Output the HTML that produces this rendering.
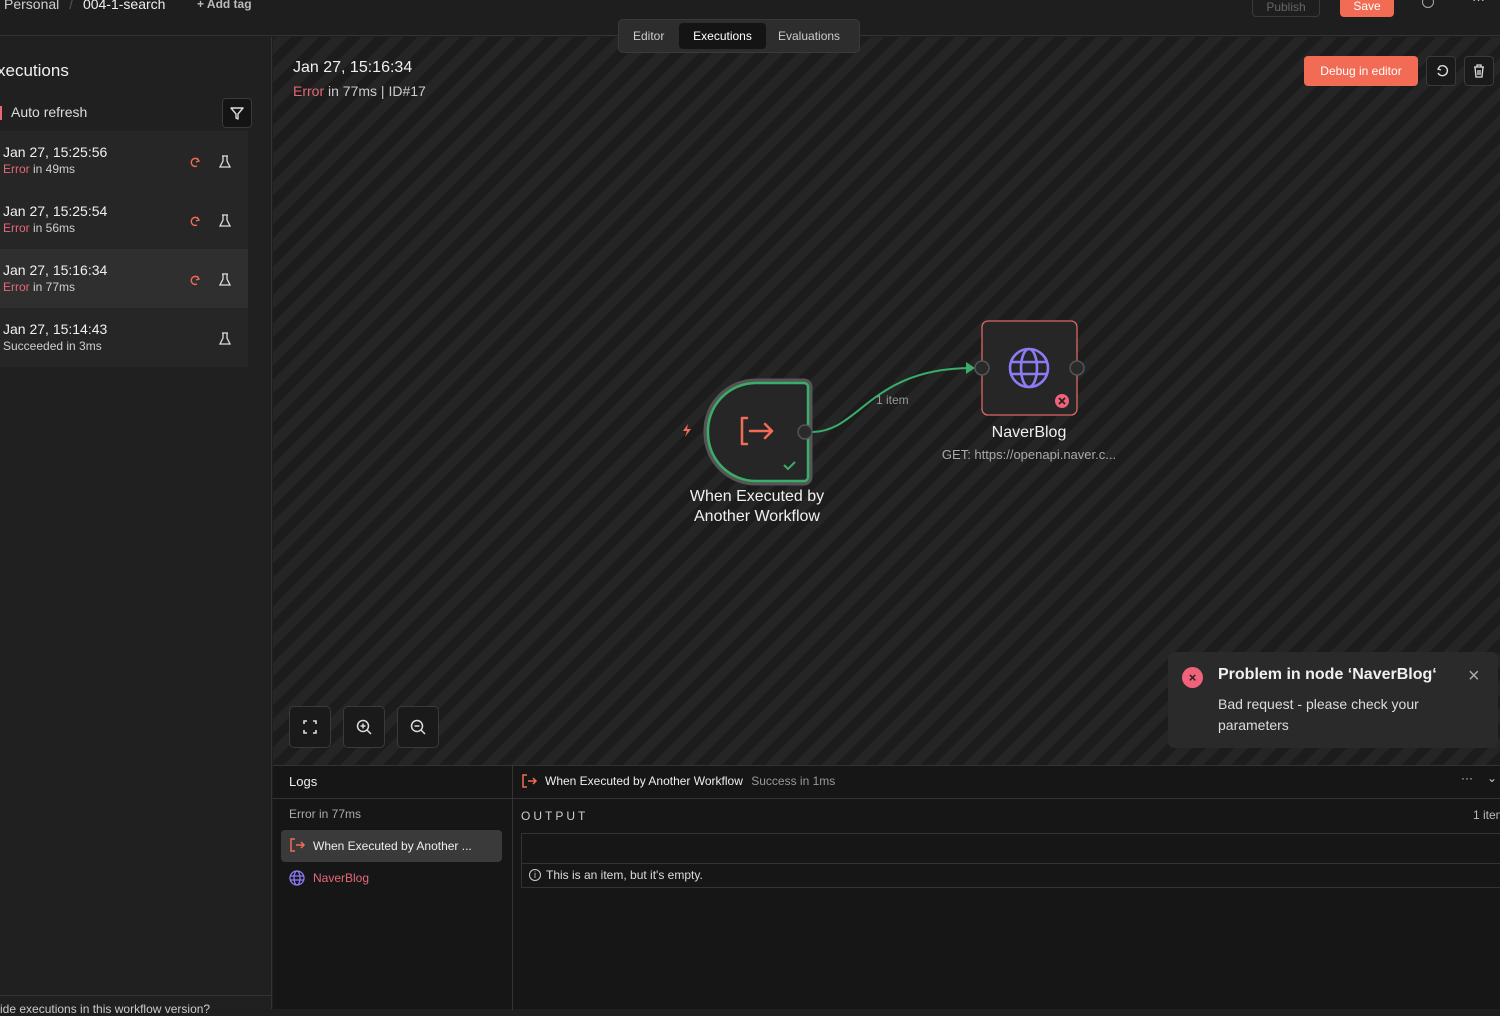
<!DOCTYPE html>
<html><head><meta charset="utf-8"><style>
*{box-sizing:border-box;margin:0;padding:0}
body{width:1500px;height:1009px;overflow:hidden;background:#1f1f1f;font-family:"Liberation Sans",sans-serif;color:#e8e8e8;position:relative;white-space:nowrap}
.abs{position:absolute}
.top{left:0;top:0;width:1500px;height:36px;background:#1e1e1e;border-bottom:1px solid #333}
.side{left:0;top:37px;width:272px;height:972px;background:#202020;border-right:1px solid #333}
.canvas{left:273px;top:37px;width:1227px;height:728px;background:repeating-linear-gradient(-45deg,#1c1c1c 0 10px,#252525 10px 20px)}
.item{position:absolute;left:0;width:248px;height:59px;background:#262626}
.item .d{position:absolute;left:3px;top:13px;font-size:14px;color:#f0f0f0}
.item .s{position:absolute;left:3px;top:31px;font-size:12px;color:#cfcfcf}
.err{color:#e5687a}
.btn{position:absolute;width:42px;height:42px;border:1px solid #3a3a3a;border-radius:5px;background:#1a1a1a}
.logs{left:273px;top:765px;width:1227px;height:244px;background:#161616;border-top:1px solid #333}
</style></head><body>
<div class="abs top">
 <div class="abs" style="left:4px;top:-4px;font-size:14px;color:#cfcfcf">Personal <span style="color:#555;margin:0 6px">/</span> <span style="color:#eee">004-1-search</span></div>
 <div class="abs" style="left:197px;top:-3px;font-size:12px;color:#bbb;font-weight:bold">+ Add tag</div>
 <div class="abs" style="left:1252px;top:-10px;width:68px;height:27px;border:1px solid #3a3a3a;border-radius:4px;font-size:12px;color:#666;text-align:center;padding-top:9px">Publish</div>
 <div class="abs" style="left:1340px;top:-10px;width:54px;height:27px;background:#f26b55;border-radius:4px;font-size:12px;color:#fff;text-align:center;padding-top:9px">Save</div>
 <div class="abs" style="left:1422px;top:-4px;width:12px;height:12px;border:1.5px solid #aaa;border-radius:50%"></div>
 <div class="abs" style="left:1472px;top:-8px;font-size:13px;color:#ccc">···</div>
</div>
<div class="abs side">
 <div class="abs" style="left:-3px;top:24px;font-size:17px;color:#f0f0f0">xecutions</div>
 <div class="abs" style="left:0;top:69px;width:2px;height:14px;background:#e5687a"></div>
 <div class="abs" style="left:11px;top:67px;font-size:14px;color:#ddd">Auto refresh</div>
 <div class="abs" style="left:222px;top:61px;width:30px;height:30px;border:1px solid #3a3a3a;border-radius:4px;background:#141414">
  <svg width="28" height="28" viewBox="0 0 28 28"><path d="M8 9h12l-5 6v5l-2-1v-4z" fill="none" stroke="#ddd" stroke-width="1.4" stroke-linejoin="round"/></svg></div>
 <div class="item" style="top:94px"><div class="d">Jan 27, 15:25:56</div><div class="s"><span class="err">Error</span> in 49ms</div></div>
 <div class="item" style="top:153px"><div class="d">Jan 27, 15:25:54</div><div class="s"><span class="err">Error</span> in 56ms</div></div>
 <div class="item" style="top:212px;background:#2f2f2f"><div class="d">Jan 27, 15:16:34</div><div class="s"><span class="err">Error</span> in 77ms</div></div>
 <div class="item" style="top:271px"><div class="d">Jan 27, 15:14:43</div><div class="s">Succeeded in 3ms</div></div>
 <svg class="abs" style="left:0;top:94px" width="248" height="240">
  <g fill="none" stroke="#f26b55" stroke-width="1.4"><path d="M199 30a4 4 0 1 0 -2 5M197 27l2 3-3 1"/><path d="M199 89a4 4 0 1 0 -2 5M197 86l2 3-3 1"/><path d="M199 148a4 4 0 1 0 -2 5M197 145l2 3-3 1"/></g>
  <g fill="none" stroke="#ddd" stroke-width="1.3"><path d="M223 25v5l-3 6h10l-3-6v-5M222 25h6"/><path d="M223 84v5l-3 6h10l-3-6v-5M222 84h6"/><path d="M223 143v5l-3 6h10l-3-6v-5M222 143h6"/><path d="M223 202v5l-3 6h10l-3-6v-5M222 202h6"/></g>
 </svg>
 <div class="abs" style="left:0;top:958px;width:272px;height:1px;background:#333"></div>
 <div class="abs" style="left:0;top:965px;font-size:12px;color:#ccc">ide executions in this workflow version?</div>
</div>
<div class="abs canvas">
 <div class="abs" style="left:20px;top:22px;font-size:16px;color:#f0f0f0">Jan 27, 15:16:34</div>
 <div class="abs" style="left:20px;top:46px;font-size:14px;color:#ccc"><span class="err">Error</span> in 77ms | ID#17</div>
 <div class="abs" style="left:1031px;top:19px;width:114px;height:30px;background:#f26b55;border-radius:4px;font-size:12px;color:#fff;text-align:center;padding-top:8px">Debug in editor</div>
 <div class="btn" style="left:1153px;top:19px;width:30px;height:30px;border-radius:4px"><svg width="28" height="28"><path d="M11 16a5 5 0 1 0 1-6M13 9l-2 3 3 1" fill="none" stroke="#ddd" stroke-width="1.4"/></svg></div>
 <div class="btn" style="left:1191px;top:19px;width:30px;height:30px;border-radius:4px"><svg width="28" height="28"><path d="M9 10h10M12 10V8h4v2M10 10l1 10h6l1-10M13 13v5M15 13v5" fill="none" stroke="#ddd" stroke-width="1.3"/></svg></div>
 <div class="abs" style="left:603px;top:356px;font-size:12px;color:#999">1 item</div>
 <div class="btn" style="left:16px;top:669px"><svg width="40" height="40"><path d="M14 17v-3h3M23 14h3v3M26 23v3h-3M17 26h-3v-3" fill="none" stroke="#ddd" stroke-width="1.6"/></svg></div>
 <div class="btn" style="left:70px;top:669px"><svg width="40" height="40"><circle cx="19" cy="19" r="5.5" fill="none" stroke="#ddd" stroke-width="1.5"/><path d="M23 23l4 4M19 16.5v5M16.5 19h5" stroke="#ddd" stroke-width="1.5"/></svg></div>
 <div class="btn" style="left:124px;top:669px"><svg width="40" height="40"><circle cx="19" cy="19" r="5.5" fill="none" stroke="#ddd" stroke-width="1.5"/><path d="M23 23l4 4M16.5 19h5" stroke="#ddd" stroke-width="1.5"/></svg></div>
 <div class="abs" style="left:895px;top:615px;width:330px;height:96px;background:#2a2a2a;border-radius:6px">
  <div class="abs" style="left:14px;top:15px;width:21px;height:21px;border-radius:50%;background:#f0627a;color:#222;font-size:13px;text-align:center;line-height:21px;font-weight:bold">×</div>
  <div class="abs" style="left:50px;top:14px;font-size:16px;font-weight:bold;color:#f0f0f0">Problem in node ‘NaverBlog‘</div>
  <div class="abs" style="left:50px;top:42px;font-size:14px;color:#ddd;line-height:21px;width:240px;white-space:normal">Bad request - please check your parameters</div>
  <div class="abs" style="left:300px;top:13px;font-size:20px;color:#aaa">×</div>
 </div>
</div>
<svg class="abs" style="left:0;top:0" width="1500" height="765">
 <path d="M812 432 C860 432 870 368 972 368" fill="none" stroke="#3aad6a" stroke-width="2"/>
 <path d="M966 362l9 6-9 6z" fill="#3aad6a"/>
 <path d="M756 383h48a4 4 0 0 1 4 4v90a4 4 0 0 1 -4 4h-48a48 48 0 0 1 -48 -48v0a48 48 0 0 1 48-50z" fill="none" stroke="#555" stroke-width="9"/>
 <path d="M756 383h48a4 4 0 0 1 4 4v90a4 4 0 0 1 -4 4h-48a48 48 0 0 1 -48 -48v0a48 48 0 0 1 48-50z" fill="#262626" stroke="#3aad6a" stroke-width="2.5"/>
 <path d="M747 418h-5v26h5M750 431h22M765 424l7 7-7 7" fill="none" stroke="#f26b55" stroke-width="2.5" stroke-linecap="round" stroke-linejoin="round"/>
 <path d="M784 465l4 4 7-7" fill="none" stroke="#3aad6a" stroke-width="2"/>
 <path d="M688 424l-5 7h4l-2 6 6-8h-4z" fill="#f26b55"/>
 <circle cx="805" cy="432" r="7" fill="#2a2a2a" stroke="#555" stroke-width="1.5"/>
 <rect x="982" y="321" width="95" height="94" rx="6" fill="#262626" stroke="#d66" stroke-width="1.3"/>
 <g fill="none" stroke="#8b7cf6" stroke-width="2.6"><circle cx="1029" cy="368" r="19"/><ellipse cx="1029" cy="368" rx="8" ry="19"/><path d="M1011 362h36M1011 374h36"/></g>
 <circle cx="1062" cy="401" r="7" fill="#f0627a"/><path d="M1059 398l6 6M1065 398l-6 6" stroke="#222" stroke-width="1.8"/>
 <circle cx="982" cy="368" r="7" fill="#2a2a2a" stroke="#555" stroke-width="1.5"/>
 <circle cx="1077" cy="368" r="7" fill="#2a2a2a" stroke="#555" stroke-width="1.5"/>
</svg>
<div class="abs" style="left:677px;top:487px;width:160px;text-align:center;font-size:16px;line-height:20px;color:#f0f0f0;white-space:normal">When Executed by Another Workflow</div>
<div class="abs" style="left:929px;top:424px;width:200px;text-align:center;font-size:16px;color:#f0f0f0">NaverBlog</div>
<div class="abs" style="left:929px;top:447px;width:200px;text-align:center;font-size:13px;color:#aaa">GET: https://openapi.naver.c...</div>
<div class="abs" style="left:618px;top:19px;width:242px;height:34px;background:#2d2d2d;border-radius:5px;border:1px solid #3a3a3a;font-size:12px;color:#ccc">
 <div class="abs" style="left:14px;top:9px">Editor</div>
 <div class="abs" style="left:60px;top:3px;width:87px;height:26px;background:#141414;border-radius:4px;color:#fff;text-align:center;padding-top:6px">Executions</div>
 <div class="abs" style="left:159px;top:9px">Evaluations</div>
</div>
<div class="abs logs">
 <div class="abs" style="left:16px;top:8px;font-size:13px;color:#eee">Logs</div>
 <div class="abs" style="left:0;top:32px;width:1227px;height:1px;background:#333"></div>
 <div class="abs" style="left:239px;top:0;width:1px;height:244px;background:#333"></div>
 <div class="abs" style="left:16px;top:41px;font-size:12px;color:#aaa">Error in 77ms</div>
 <div class="abs" style="left:8px;top:64px;width:221px;height:32px;background:#3a3a3a;border-radius:4px"></div>
 <div class="abs" style="left:40px;top:73px;font-size:12px;color:#eee">When Executed by Another ...</div>
 <div class="abs" style="left:40px;top:105px;font-size:12px;color:#e5687a">NaverBlog</div>
 <svg class="abs" style="left:0;top:0" width="300" height="130"><path d="M22 73h-4v12h4M23 79h8M28 76l3 3-3 3" fill="none" stroke="#f26b55" stroke-width="1.5"/><path d="M22 9h-4v12h4M23 15h8M28 12l3 3-3 3" transform="translate(232,0)" fill="none" stroke="#f26b55" stroke-width="1.5"/><g fill="none" stroke="#8b7cf6" stroke-width="1.3"><circle cx="24" cy="112" r="7"/><ellipse cx="24" cy="112" rx="3" ry="7"/><path d="M17 110h14M17 114h14"/></g></svg>
 <div class="abs" style="left:272px;top:8px;font-size:12px;color:#eee">When Executed by Another Workflow <span style="color:#999;margin-left:5px">Success in 1ms</span></div>
 <div class="abs" style="left:1188px;top:5px;font-size:12px;color:#ccc">···</div>
 <div class="abs" style="left:1214px;top:5px;font-size:12px;color:#ccc">⌄</div>
 <div class="abs" style="left:248px;top:43px;font-size:12px;color:#ccc;letter-spacing:3px">OUTPUT</div>
 <div class="abs" style="left:1200px;top:42px;font-size:12px;color:#bbb">1 item</div>
 <div class="abs" style="left:248px;top:67px;width:990px;height:55px;border:1px solid #333"></div>
 <div class="abs" style="left:248px;top:97px;width:990px;height:1px;background:#333"></div>
 <div class="abs" style="left:256px;top:103px;width:12px;height:12px;border:1px solid #ccc;border-radius:50%;font-size:9px;text-align:center;line-height:10px;color:#ccc">i</div>
 <div class="abs" style="left:273px;top:102px;font-size:12px;color:#ddd">This is an item, but it's empty.</div>
</div>
</body></html>
